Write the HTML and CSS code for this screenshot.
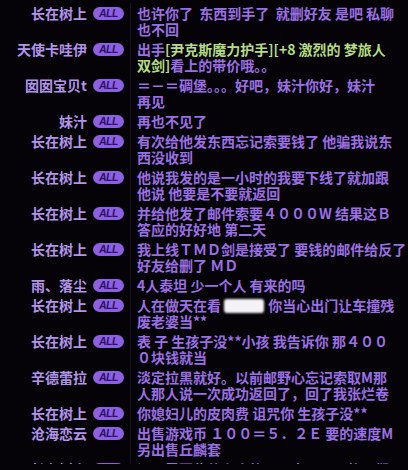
FILE: index.html
```html
<!DOCTYPE html>
<html lang="zh">
<head>
<meta charset="utf-8">
<link rel="stylesheet" href="styles.css">
</head>
<body>
<div class="chat">
  <div class="row"><div class="name">长在树上</div><div class="tag"><span class="badge">ALL</span></div><div class="msg">也许你了&nbsp; 东西到手了&nbsp; 就删好友 是吧 私聊<br>也不回</div></div>
  <div class="row"><div class="name">天使卡哇伊</div><div class="tag"><span class="badge">ALL</span></div><div class="msg">出手<span class="item">[尹克斯魔力护手][+8 激烈的 梦旅人</span><br><span class="item">双剑]</span>看上的带价哦。。</div></div>
  <div class="row"><div class="name">囡囡宝贝t</div><div class="tag"><span class="badge">ALL</span></div><div class="msg">＝－＝碉堡。。。好吧，妹汁你好，妹汁<br>再见</div></div>
  <div class="row"><div class="name">妹汁</div><div class="tag"><span class="badge">ALL</span></div><div class="msg">再也不见了</div></div>
  <div class="row"><div class="name">长在树上</div><div class="tag"><span class="badge">ALL</span></div><div class="msg">有次给他发东西忘记索要钱了 他骗我说东<br>西没收到</div></div>
  <div class="row"><div class="name">长在树上</div><div class="tag"><span class="badge">ALL</span></div><div class="msg">他说我发的是一小时的我要下线了就加跟<br>他说 他要是不要就返回</div></div>
  <div class="row"><div class="name">长在树上</div><div class="tag"><span class="badge">ALL</span></div><div class="msg">并给他发了邮件索要４０００W 结果这Ｂ<br>答应的好好地 第二天</div></div>
  <div class="row"><div class="name">长在树上</div><div class="tag"><span class="badge">ALL</span></div><div class="msg">我上线ＴＭＤ剑是接受了 要钱的邮件给反了<br>好友给删了 ＭＤ</div></div>
  <div class="row"><div class="name">雨、落尘</div><div class="tag"><span class="badge">ALL</span></div><div class="msg">4人泰坦 少一个人 有来的吗</div></div>
  <div class="row"><div class="name">长在树上</div><div class="tag"><span class="badge">ALL</span></div><div class="msg">人在做天在看 <span class="blur"></span>你当心出门让车撞残<br>废老婆当**</div></div>
  <div class="row"><div class="name">长在树上</div><div class="tag"><span class="badge">ALL</span></div><div class="msg">表 子 生孩子没**小孩 我告诉你 那４００<br>０块钱就当</div></div>
  <div class="row"><div class="name">辛德蕾拉</div><div class="tag"><span class="badge">ALL</span></div><div class="msg">淡定拉黑就好。以前邮野心忘记索取M那<br>人那人说一次成功返回了，回了我张烂卷</div></div>
  <div class="row"><div class="name">长在树上</div><div class="tag"><span class="badge">ALL</span></div><div class="msg">你媳妇儿的皮肉费 诅咒你 生孩子没**</div></div>
  <div class="row"><div class="name">沧海恋云</div><div class="tag"><span class="badge">ALL</span></div><div class="msg">出售游戏币 １００＝５．２Ｅ 要的速度M<br>另出售丘麟套</div></div>
  <div class="row"><div class="name">长在树上</div><div class="tag"><span class="badge">ALL</span></div><div class="msg">证正需要些什么个的一下去了下面的人们</div></div>
</div>
</body>
</html>
```

FILE: styles.css
```css
html, body {
  margin: 0;
  padding: 0;
  background: #050308;
}
.chat {
  height: 464px;
  overflow: hidden;
  padding-top: 3px;
  box-sizing: border-box;
  font-family: "Noto Sans CJK SC", "Noto Sans", sans-serif;
  font-size: 14px;
  font-weight: bold;
  line-height: 16px;
}
.row {
  display: flex;
  align-items: flex-start;
}
.name {
  width: 87px;
  flex: none;
  text-align: right;
  color: #b294ea;
  white-space: nowrap;
  padding-top: 2px;
}
.tag {
  width: 43px;
  flex: none;
  height: 16px;
  margin-top: 2px;
  display: flex;
  align-items: center;
  padding-left: 6px;
  box-sizing: border-box;
}
.badge {
  display: block;
  width: 31px;
  height: 13px;
  border-radius: 7px;
  background: #8d60e3;
  color: #2c1260;
  font-family: "Liberation Sans", sans-serif;
  font-size: 10.5px;
  font-style: italic;
  font-weight: bold;
  line-height: 13px;
  text-align: center;
  letter-spacing: -0.4px;
}
.msg {
  flex: 1;
  border-left: 1px solid #17131d;
  padding: 2px 0 2px 6px;
  color: #9b6fe4;
  white-space: nowrap;
}
.item {
  color: #b6dc80;
}
.blur {
  display: inline-block;
  width: 40px;
  height: 14px;
  vertical-align: -2px;
  background: #f4f2f6;
  border-radius: 3px;
  filter: blur(1px);
  margin-right: 4px;
}
```
